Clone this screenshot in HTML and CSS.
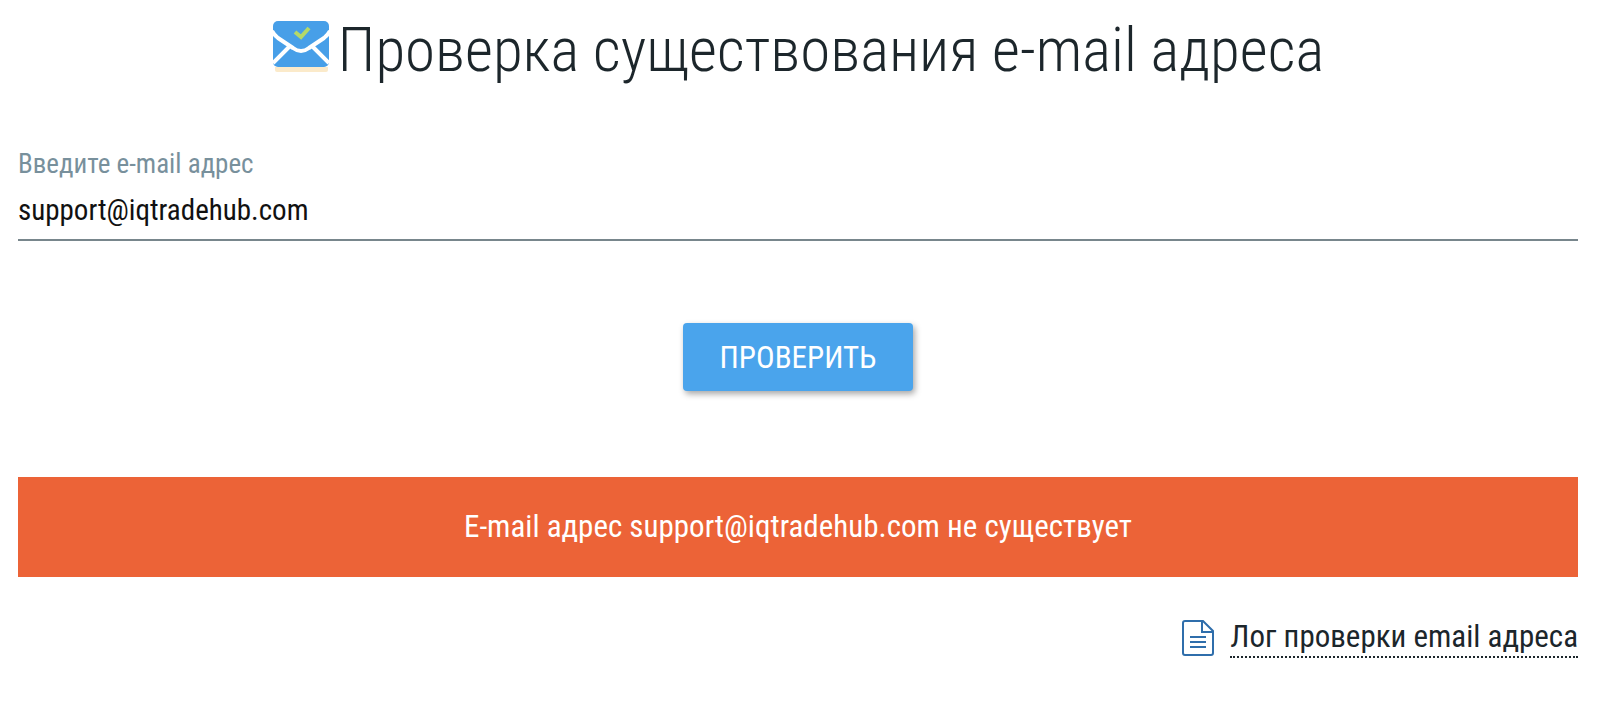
FILE: index.html
```html
<!DOCTYPE html>
<html lang="ru">
<head>
    <meta charset="UTF-8">
    <meta name="viewport" content="width=device-width, initial-scale=1">
    <title>Проверка существования e-mail адреса</title>
    <link rel="stylesheet" href="styles.css">
</head>
<body>

<main class="checker">
    <h1 class="title">
        <svg class="title-icon" viewBox="0 0 58 52" aria-hidden="true">
            <path d="M3 47h53v3a2 2 0 0 1-2 2H5a2 2 0 0 1-2-2z" fill="#fbeaca"/>
            <rect x="1" y="1" width="56" height="46" rx="5" fill="#479fe8"/>
            <path d="M0 11Q2 15 6 18L21 28Q29 34 37 28L52 18Q56 15 58 11" fill="none" stroke="#fff" stroke-width="4"/>
            <path d="M1 43 17 27M57 43 41 27" fill="none" stroke="#fff" stroke-width="4"/>
            <path d="M23 12l6 5 8-9" fill="none" stroke="#b4d969" stroke-width="4"/>
        </svg>
        Проверка существования e-mail адреса
    </h1>

    <form class="form" onsubmit="return false">
        <label class="form-label" for="email">Введите e-mail адрес</label>
        <input class="form-input" type="email" id="email" value="support@iqtradehub.com">
        <button class="form-button" type="submit">ПРОВЕРИТЬ</button>
    </form>

    <div class="result">E-mail адрес support@iqtradehub.com не существует</div>

    <div class="log">
        <svg class="log-icon" viewBox="0 0 32 36" aria-hidden="true">
            <path d="M3 1h18l10 10v22a2 2 0 0 1-2 2H3a2 2 0 0 1-2-2V3a2 2 0 0 1 2-2zM20 2v10h10M8 17h16M8 22h16M8 27h16"/>
        </svg>
        <a class="log-link" href="#log">Лог проверки email адреса</a>
    </div>
</main>

</body>
</html>
```
FILE: styles.css
```css
* {
    box-sizing: border-box;
}

body {
    margin: 0;
    background: #fff;
    color: #1c262b;
    font-family: "Roboto Condensed", Roboto, sans-serif;
    font-size: 31px;
}

.checker {
    padding: 14px 22px 0 18px;
}

.title {
    display: flex;
    justify-content: center;
    gap: 8px;
    margin: 0;
    font-size: 61px;
    font-weight: 300;
    line-height: 72px;
}

.title-icon {
    flex: none;
    width: 58px;
    height: 52px;
    margin-top: 6px;
}

.form {
    display: flex;
    flex-direction: column;
    margin-top: 60px;
}

.form-label {
    color: #78909c;
    font-size: 27px;
    line-height: 37px;
}

.form-input {
    width: 100%;
    height: 58px;
    padding: 0 0 2px;
    border: none;
    border-bottom: 2px solid #78868c;
    background: none;
    color: #111;
    font: inherit;
    font-size: 29px;
    outline: none;
}

.form-button {
    align-self: center;
    height: 68px;
    margin: 82px 0 86px;
    padding: 0 37px;
    border: none;
    border-radius: 4px;
    background: #4aa4ec;
    box-shadow: 2px 3px 6px rgba(0, 0, 0, 0.35);
    color: #fff;
    font: inherit;
    cursor: pointer;
}

.result {
    padding: 32px 16px;
    background: #ec6337;
    color: #fff;
    line-height: 36px;
    text-align: center;
}

.log {
    display: flex;
    justify-content: flex-end;
    align-items: center;
    gap: 16px;
    margin-top: 41px;
}

.log-icon {
    flex: none;
    width: 32px;
    height: 36px;
    fill: none;
    stroke: #2f6eab;
    stroke-width: 2;
}

.log-link {
    border-bottom: 2px dotted #1c262b;
    color: #1c262b;
    line-height: 38px;
    text-decoration: none;
}
```
